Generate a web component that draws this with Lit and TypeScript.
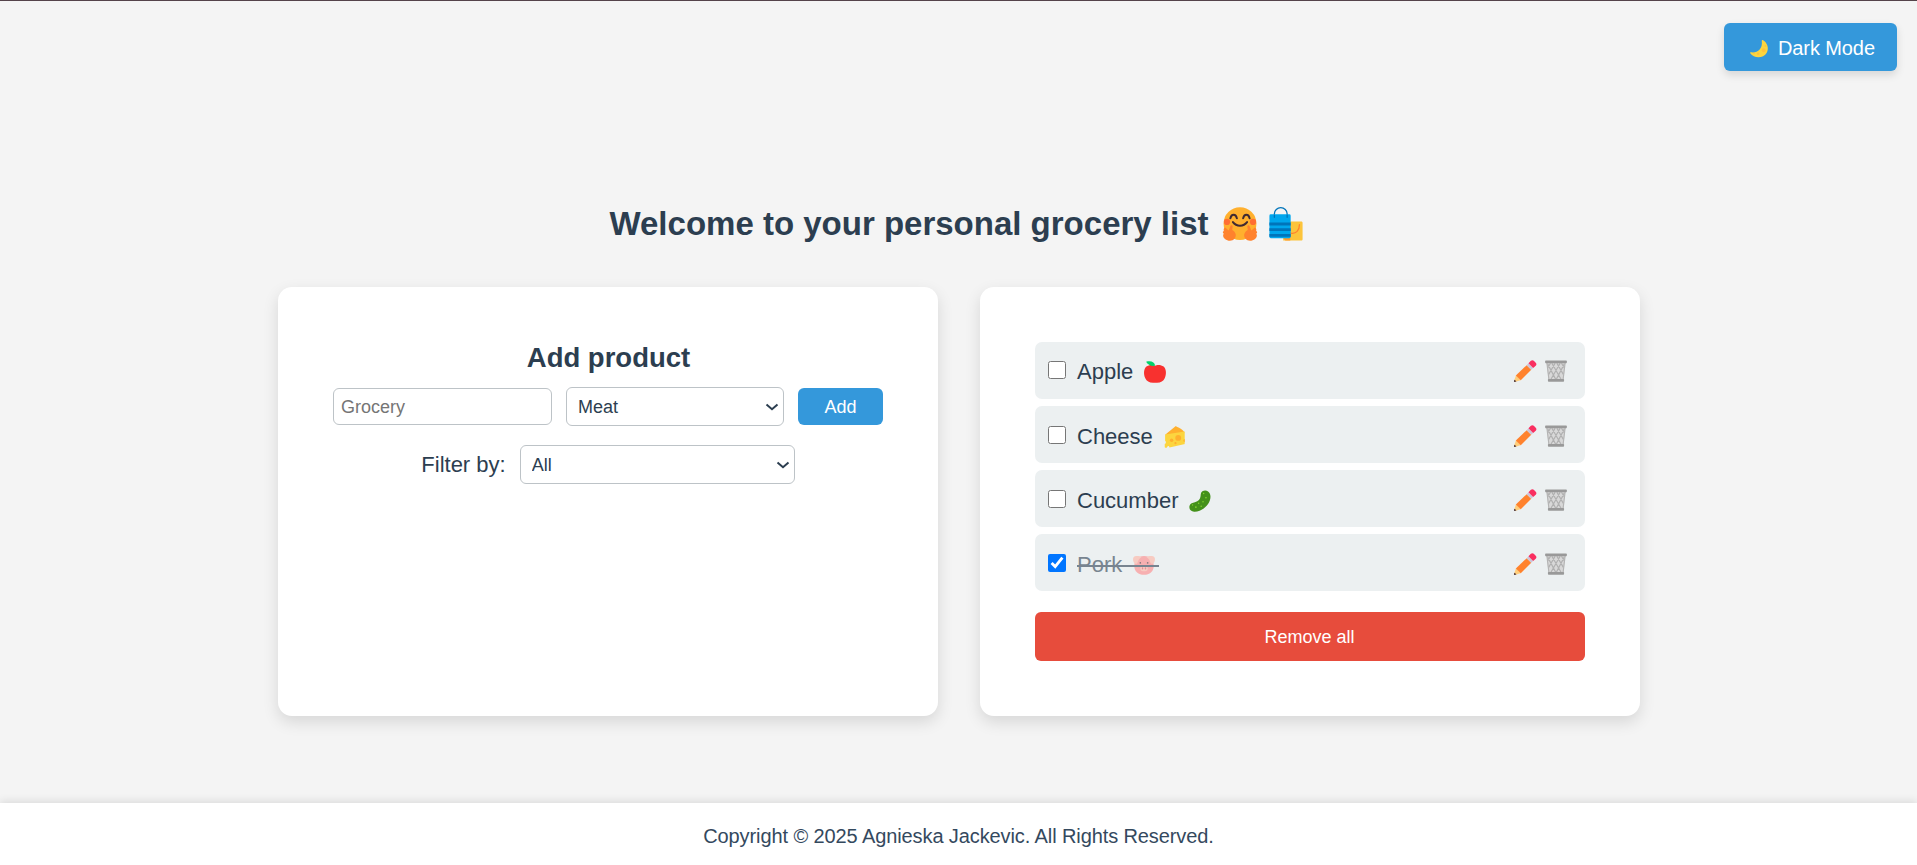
import { LitElement, html, css, svg } from "lit";
import { customElement, state } from "lit/decorators.js";

const glyphs: Record<string, unknown> = {
  moon: svg`<path d="M15.7 2.300c5 2.700 7.600 9.500 4.600 14.500-3.800 6.600-14.300 7.100-18.900.6-.4-.7.200-1.300 1-1.100 7 1 13.500-3.700 12.200-12.900-.1-1 .4-1.400 1.100-1.100z" fill="#fcd53f"/><circle cx="16.800" cy="14" r="2.200" fill="#ffc23a"/><circle cx="10.500" cy="18" r="1.500" fill="#ffc23a"/><circle cx="18.800" cy="9" r="1" fill="#ffc23a"/><circle cx="5.600" cy="17.800" r=".9" fill="#ffc23a"/>`,
  hug: svg`<circle cx="12" cy="11.700" r="11.600" fill="#ffb02e"/><circle cx="2.800" cy="10.500" r="2.200" fill="#ff6e33"/><circle cx="21.200" cy="10.500" r="2.200" fill="#ff6e33"/><path d="M5.200 8c.7-3.300 3.900-3.300 4.600 0M14.200 8c.7-3.300 3.900-3.300 4.600 0M7 10.700c2.500 3.300 7.500 3.300 10 0" fill="none" stroke="#402a32" stroke-width="1.400" stroke-linecap="round"/><path d="M1.500 14.500l2.500 2 1.200-3c.5-1 1.700-.6 1.600.5l-.3 2.200c2.600 1.500 3.300 4 1.700 6-1.500 2-4.700 2-6.800.3C0 21.300-.3 19.800.5 18.800c-.9-.9-.8-1.600.1-1.900-.4-1.300.1-2 .9-2.400zM22.500 14.500l-2.500 2-1.200-3c-.5-1-1.700-.6-1.600.5l.3 2.200c-2.600 1.500-3.300 4-1.700 6 1.500 2 4.700 2 6.800.3 1.400-1.200 1.700-2.700.9-3.700.9-.9.8-1.600-.1-1.900.4-1.300-.1-2-.9-2.400z" fill="#ff822d"/>`,
  bags: svg`<path d="M10 10.300h12.700c.7 0 1 .4 1 1v11.400c0 .7-.4 1-1 1H10z" fill="#fcc43b"/><path d="M10 21.500h5v2.200h-3.500z" fill="#ff9a2e"/><path d="M15.200 18.400c4 .8 6.300-1.900 6.300-6" fill="none" stroke="#ff822d" stroke-width=".9" stroke-linecap="round"/><path d="M3.800 6.200V4.800a4.500 4.300 0 0 1 9 0v2.500" fill="none" stroke="#0074ba" stroke-width=".9" stroke-linecap="round"/><rect x=".3" y="5.200" width="15" height="16.800" rx="1" fill="#00a6ed"/><path d="M.3 11h15v2H.3zM.3 15h15v2H.3zM.3 19h15v2H.3z" fill="#0074ba"/><path d="M3.800 5.800v1.500M12.800 5.800v1.500" stroke="#0074ba" stroke-width=".9" stroke-linecap="round"/>`,
  apple: svg`<path d="M12 5.200c2-1.400 6.800-1.400 9.400.9 3 2.700 3.300 8.300 1.200 12.800C20.900 22.700 17.500 24.200 12 23.600 6.500 24.200 3.100 22.700 1.400 18.900-.7 14.400-.4 8.800 2.600 6.100 5.200 3.800 10 3.800 12 5.200z" fill="#f8312f"/><path d="M12.100 5.300C7.800 5.900 4 4.400 2.300.9 7.500-.5 11.700 1 12.100 5.300z" fill="#00d26a"/>`,
  cheese: svg`<path d="M1.200 9.500 11.900.7c.7-.5 1.200-.4 2 0 3.500 1.600 6.500 3 8.500 6.300L12 10z" fill="#ffb02e"/><path d="M1.200 9.200 22.600 6v12.800c0 .7-.2 1-.9 1.100l-15.700 3.500C5.500 21.300 4 21.500 3 23.700l-1.400.1c-.5 0-.8-.3-.8-.8V19.500c1.500-.4 1.800-2.800.4-3.500z" fill="#fcd53f"/><circle cx="15.500" cy="13" r="3.200" fill="#ffb02e"/><circle cx="8.300" cy="15.500" r="1.900" fill="#ffb02e"/><circle cx="12.500" cy="18.700" r="1.200" fill="#ffb02e"/><path d="M22.600 14.300c-1.700.3-2.300 2.700 0 3.400z" fill="#ffb02e"/>`,
  cucumber: svg`<path d="M13 3.800c.5-3 5-4.200 7.800-2.300 3.700 2.600 3.400 9-.2 14-3.700 5.200-9.700 8.400-15.100 8.100C1.800 23.400-.3 20.500.6 17.200c.8-2.900 3.300-3.400 5.800-3.900 4-.9 5.900-3.300 6.200-6.500.1-1.100.2-2.100.4-3z" fill="#44911b"/><g fill="#86d72f"><circle cx="16" cy="3.700" r=".8"/><circle cx="18.500" cy="8.500" r=".9"/><circle cx="15.300" cy="12.700" r=".8"/><circle cx="10.500" cy="14.500" r=".8"/><circle cx="13.300" cy="17.700" r=".8"/><circle cx="7.500" cy="18.700" r=".9"/><circle cx="3.900" cy="16.300" r=".7"/></g>`,
  pig: svg`<path d="M12 2.300c7 0 10.600 5 10.600 10.700 0 6-4.600 9.700-10.600 9.700S1.400 19 1.400 13C1.400 7.300 5 2.300 12 2.300z" fill="#ff8687"/><path d="M1.500 2.700c3-1 6-.5 7.700.9C7 4.500 5.700 7 4.800 9.800 3.900 12 .7 10 .2 7.300-.1 5.500 0 3.400 1.500 2.700zM22.500 2.700c-3-1-6-.5-7.700.9C17 4.500 18.300 7 19.200 9.800c.9 2.200 4.100.2 4.600-2.500.3-1.800.2-3.900-1.300-4.600z" fill="#ffb4a3"/><circle cx="8" cy="9.700" r=".9" fill="#402a32"/><circle cx="16" cy="9.700" r=".9" fill="#402a32"/><rect x="8" y="12.700" width="8" height="6" rx="2.900" fill="#ffb4a3"/><ellipse cx="10.400" cy="15.700" rx=".8" ry="1.200" fill="#e3505a"/><ellipse cx="13.600" cy="15.700" rx=".8" ry="1.200" fill="#e3505a"/>`,
  pencil: svg`<path d="M.4 21.800 2.200 16.600l5.600 5.200-6 2c-1 .3-1.700-1-1.400-2z" fill="#ffce7c"/><path d="M.5 21.600 0 23c-.2.600.3 1.100.9.900l1.700-.6z" fill="#402a32"/><path d="M2 17 13.800 5.600l5 5L7.400 22z" fill="#ff822d"/><path d="M13.800 5.600l2-2 5 5-2 2z" fill="#cdc4d6"/><path d="M15.800 3.600 18.400.9c1-1 2.200-1 3.200 0L23.700 3c1 1 1 2.200 0 3.200L20.900 8.700z" fill="#f92f60"/>`,
  trash: svg`<path d="M1.800 3h20.400l-2.200 19H4z" fill="#d8d8d8"/><path d="M3 4.500 12.200 22M7.500 3.500 17.500 21M13 3.500l7 12.200M18 3.500l3 5M21 4.500 11.800 22M16.500 3.500 6.500 21M11 3.500 4 15.700M6 3.500l-3 5" fill="none" stroke="#b0b0b0" stroke-width="1.300"/><path d="M2.100 3.300 4.300 21.500M21.900 3.300 19.700 21.500" stroke="#b4b4b4" stroke-width="1.300"/><rect x=".2" y=".6" width="23.600" height="2.900" rx=".7" fill="#999"/><rect x="3.200" y="20.600" width="17.600" height="3.200" rx=".9" fill="#999"/>`,
};

const icon = (name: string, cls = "") =>
  html`<svg class="icon ${cls}" viewBox="0 0 24 24" aria-hidden="true">${glyphs[name]}</svg>`;

const dropdown = (value: string, cls: string) => html`<span class="drop ${cls}">
  <select class="select"><option>${value}</option></select>
  <svg class="chevron" viewBox="0 0 14 8" aria-hidden="true"><path d="M1.500 1.500 7 6.200l5.500-4.700" /></svg>
</span>`;

interface Product {
  name: string;
  glyph: string;
  done: boolean;
}

@customElement("app-root")
export class AppRoot extends LitElement {
  @state() private products: Product[] = [
    { name: "Apple", glyph: "apple", done: false },
    { name: "Cheese", glyph: "cheese", done: false },
    { name: "Cucumber", glyph: "cucumber", done: false },
    { name: "Pork", glyph: "pig", done: true },
  ];

  static styles = css`
    :host {
      display: flex;
      flex-direction: column;
      height: 865px;
      box-sizing: border-box;
      border-top: 1px solid #54434a;
      background: #f4f4f4;
      color: #2c3e50;
      font-family: "Liberation Sans", Arial, sans-serif;
      font-size: 22px;
      overflow: hidden;
    }
    * { box-sizing: border-box; }
    button, input, select { font-family: inherit; font-size: 18px; margin: 0; }
    button { border: 0; color: #fff; cursor: pointer; border-radius: 6px; }
    .icon { display: block; flex: none; width: 22px; height: 22px; overflow: visible; }
    .top { display: flex; justify-content: flex-end; padding: 22px 20px 0 0; }
    .mode {
      display: flex;
      align-items: center;
      width: 173px;
      height: 48px;
      padding: 2px 0 0 26px;
      background: #3498db;
      font-size: 20px;
      letter-spacing: -0.1px;
      box-shadow: 0 4px 8px rgba(0, 0, 0, 0.12);
      white-space: nowrap;
    }
    .moon { width: 21px; height: 21px; margin: 0 8px 0 -1px; }
    .title {
      display: flex;
      justify-content: center;
      align-items: center;
      margin: 130px 0 0;
      height: 46px;
      padding-right: 5px;
      font-size: 33px;
      line-height: 46px;
    }
    .big { width: 34px; height: 34px; margin-top: -1px; }
    .hug { margin-left: 14px; }
    .bags { margin-left: 12px; }
    .cards { display: flex; justify-content: center; gap: 42px; margin-top: 40px; padding-left: 1px; }
    .card {
      width: 660px;
      height: 429px;
      padding: 55px;
      background: #fff;
      border-radius: 14px;
      box-shadow: 0 6px 16px rgba(0, 0, 0, 0.12);
    }
    .subtitle { margin: 0; padding-left: 1px; font-size: 27.500px; line-height: 32px; text-align: center; }
    .row { display: flex; align-items: center; gap: 14px; margin-top: 13px; }
    .field, .select {
      border: 1px solid #bdc3c7;
      border-radius: 6px;
      background: #fff;
      color: #2c3e50;
    }
    .field { width: 219px; height: 37px; padding: 1px 7px 0; }
    .field::placeholder { color: #757575; }
    .drop { display: grid; align-items: center; height: 39px; }
    .drop > * { grid-area: 1 / 1; }
    .category { width: 218px; }
    .all { width: 275px; }
    .select { appearance: none; width: 100%; height: 39px; padding: 1px 0 0 11px; }
    .chevron {
      justify-self: end;
      width: 14px;
      height: 8px;
      margin-right: 5px;
      fill: none;
      stroke: #2c3e50;
      stroke-width: 2;
      pointer-events: none;
    }
    .add { width: 85px; height: 37px; padding: 1px 0 0; background: #3498db; }
    .filter { display: flex; align-items: center; justify-content: center; gap: 14px; margin-top: 19px; }
    .list { display: flex; flex-direction: column; gap: 7px; list-style: none; margin: 0; padding: 0; }
    .item {
      display: flex;
      align-items: center;
      height: 57px;
      padding: 0 18px 0 13px;
      border-radius: 7px;
      background: #ecf0f1;
    }
    .item + .item { padding-top: 2px; }
    .check { width: 18px; height: 18px; margin: 0 11px 1px 0; accent-color: #0075ff; }
    .label { position: relative; display: flex; align-items: center; gap: 11px; line-height: 26px; margin-top: 3px; }
    .label .icon { margin-top: -1px; }
    .done { opacity: 0.6; }
    .done::after {
      content: "";
      position: absolute;
      left: 0;
      right: -4px;
      top: 13px;
      height: 2px;
      background: #2c3e50;
    }
    .actions { display: flex; gap: 9px; margin-left: auto; }
    .act { padding: 0; background: none; }
    .remove { display: block; width: 550px; height: 49px; margin-top: 21px; padding: 1px 1px 0 0; background: #e74c3c; }
    .foot {
      margin-top: auto;
      height: 62px;
      background: #fff;
      box-shadow: 0 -2px 8px rgba(0, 0, 0, 0.1);
      text-align: center;
      color: #34495e;
      font-size: 20px;
      letter-spacing: -0.100px;
      line-height: 66px;
    }
  `;

  private toggle(i: number) {
    this.products = this.products.map((p, n) => (n === i ? { ...p, done: !p.done } : p));
  }

  render() {
    return html`
      <div class="top"><button class="mode">${icon("moon", "moon")}Dark Mode</button></div>
      <h1 class="title">
        <span>Welcome to your personal grocery list</span>${icon("hug", "big hug")}${icon("bags", "big bags")}
      </h1>
      <main class="cards">
        <section class="card">
          <h2 class="subtitle">Add product</h2>
          <div class="row">
            <input class="field" placeholder="Grocery" />
            ${dropdown("Meat", "category")}
            <button class="add">Add</button>
          </div>
          <div class="filter"><span>Filter by:</span>${dropdown("All", "all")}</div>
        </section>
        <section class="card">
          <ul class="list">
            ${this.products.map(
              (p, i) => html`<li class="item">
                <input class="check" type="checkbox" .checked=${p.done} @change=${() => this.toggle(i)} />
                <span class="label ${p.done ? "done" : ""}">${p.name}${icon(p.glyph)}</span>
                <span class="actions">
                  <button class="act" aria-label="Edit">${icon("pencil")}</button>
                  <button class="act" aria-label="Delete">${icon("trash")}</button>
                </span>
              </li>`
            )}
          </ul>
          <button class="remove" @click=${() => (this.products = [])}>Remove all</button>
        </section>
      </main>
      <footer class="foot">Copyright © 2025 Agnieska Jackevic. All Rights Reserved.</footer>
    `;
  }
}
